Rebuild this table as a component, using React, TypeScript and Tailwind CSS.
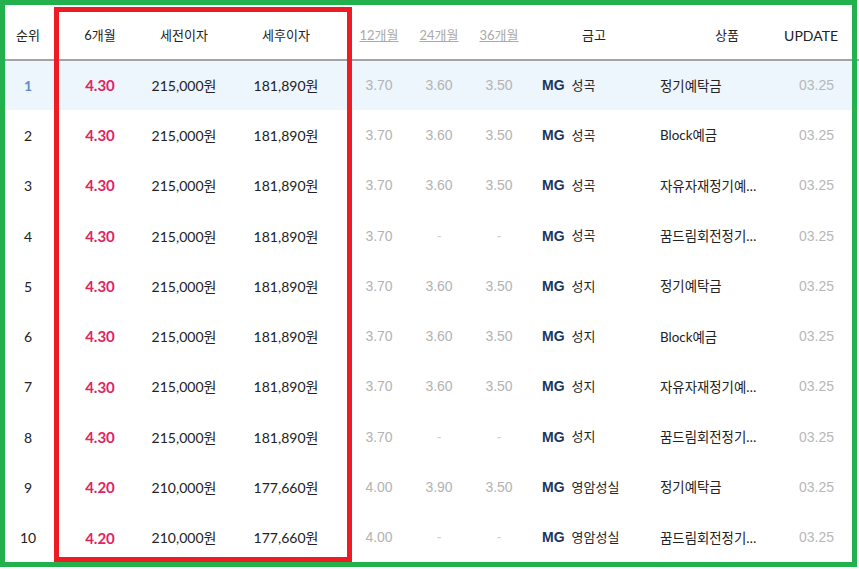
const ROWS = [
  { rank: 1, r6: '4.30', pre: '215,000원', post: '181,890원', r12: '3.70', r24: '3.60', r36: '3.50', branch: '성곡', product: '정기예탁금' },
  { rank: 2, r6: '4.30', pre: '215,000원', post: '181,890원', r12: '3.70', r24: '3.60', r36: '3.50', branch: '성곡', product: 'Block예금' },
  { rank: 3, r6: '4.30', pre: '215,000원', post: '181,890원', r12: '3.70', r24: '3.60', r36: '3.50', branch: '성곡', product: '자유자재정기예금' },
  { rank: 4, r6: '4.30', pre: '215,000원', post: '181,890원', r12: '3.70', r24: '-', r36: '-', branch: '성곡', product: '꿈드림회전정기예금' },
  { rank: 5, r6: '4.30', pre: '215,000원', post: '181,890원', r12: '3.70', r24: '3.60', r36: '3.50', branch: '성지', product: '정기예탁금' },
  { rank: 6, r6: '4.30', pre: '215,000원', post: '181,890원', r12: '3.70', r24: '3.60', r36: '3.50', branch: '성지', product: 'Block예금' },
  { rank: 7, r6: '4.30', pre: '215,000원', post: '181,890원', r12: '3.70', r24: '3.60', r36: '3.50', branch: '성지', product: '자유자재정기예금' },
  { rank: 8, r6: '4.30', pre: '215,000원', post: '181,890원', r12: '3.70', r24: '-', r36: '-', branch: '성지', product: '꿈드림회전정기예금' },
  { rank: 9, r6: '4.20', pre: '210,000원', post: '177,660원', r12: '4.00', r24: '3.90', r36: '3.50', branch: '영암성실', product: '정기예탁금' },
  { rank: 10, r6: '4.20', pre: '210,000원', post: '177,660원', r12: '4.00', r24: '-', r36: '-', branch: '영암성실', product: '꿈드림회전정기예금' },
];

function Rate({ v }: { v: string }) {
  return v === '-' ? (
    <span className="text-[#cfcfcf]">-</span>
  ) : (
    <span className="text-[#b3b3b3]">{v}</span>
  );
}

export default function App() {
  return (
    <div className="relative w-[859px] h-[569px] overflow-hidden bg-white text-[#222] font-['Lato','Noto_Sans_CJK_KR',sans-serif] text-[14px]">
      <table className="table-fixed border-collapse w-[859px]">
        <colgroup>
          <col className="w-[56px]" />
          <col className="w-[88px]" />
          <col className="w-[80px]" />
          <col className="w-[124px]" />
          <col className="w-[62px]" />
          <col className="w-[58px]" />
          <col className="w-[62px]" />
          <col className="w-[127px]" />
          <col className="w-[123px]" />
          <col className="w-[79px]" />
        </colgroup>
        <thead>
          <tr className="h-[60px] border-b-2 border-[#a3a3a3] text-[13px]">
            <th className="pt-[12px] font-normal text-center">순위</th>
            <th className="pt-[12px] font-normal text-center">6개월</th>
            <th className="pt-[12px] font-normal text-center">세전이자</th>
            <th className="pt-[12px] font-normal text-center">세후이자</th>
            <th className="pt-[12px] font-normal text-center text-[#aaa] underline">12개월</th>
            <th className="pt-[12px] font-normal text-center text-[#aaa] underline">24개월</th>
            <th className="pt-[12px] font-normal text-center text-[#aaa] underline">36개월</th>
            <th className="pt-[12px] pl-[52px] font-normal text-left">금고</th>
            <th className="pt-[12px] pl-[58px] font-normal text-left">상품</th>
            <th className="pt-[12px] pr-[21px] font-normal text-right text-[14px]">UPDATE</th>
          </tr>
        </thead>
        <tbody>
          {ROWS.map((r) => (
            <tr key={r.rank} className={`h-[50.3px] ${r.rank === 1 ? 'bg-[#edf5fd]' : ''}`}>
              <td className={`text-center ${r.rank === 1 ? 'text-[#5b8ed0] font-bold' : ''}`}>{r.rank}</td>
              <td className="text-center text-[15px] font-bold text-[#e0245f]">{r.r6}</td>
              <td className="text-center">{r.pre}</td>
              <td className="text-center">{r.post}</td>
              <td className="text-center font-['Liberation_Sans',sans-serif]"><Rate v={r.r12} /></td>
              <td className="text-center font-['Liberation_Sans',sans-serif]"><Rate v={r.r24} /></td>
              <td className="text-center font-['Liberation_Sans',sans-serif]"><Rate v={r.r36} /></td>
              <td className="pl-[12px]">
                <div className="flex items-center gap-[7px]">
                  <span className="font-['Liberation_Sans',sans-serif] font-bold text-[#1b355e]">MG</span>
                  <span className="text-[13px]">{r.branch}</span>
                </div>
              </td>
              <td className="pl-[3px]">
                <div className="w-[97.5px] truncate text-[13.4px]">{r.product}</div>
              </td>
              <td className="pr-[25px] text-right font-['Liberation_Sans',sans-serif] text-[#b8b8b8]">03.25</td>
            </tr>
          ))}
        </tbody>
      </table>

      {/* annotation frames drawn over the table */}
      <div className="absolute left-0 top-0 w-[857px] h-[567px] border-[5px] border-[#22b14c] pointer-events-none" />
      <div className="absolute left-[54px] top-[7px] w-[298px] h-[555px] border-[5px] border-[#ed1c24] pointer-events-none" />
    </div>
  );
}
